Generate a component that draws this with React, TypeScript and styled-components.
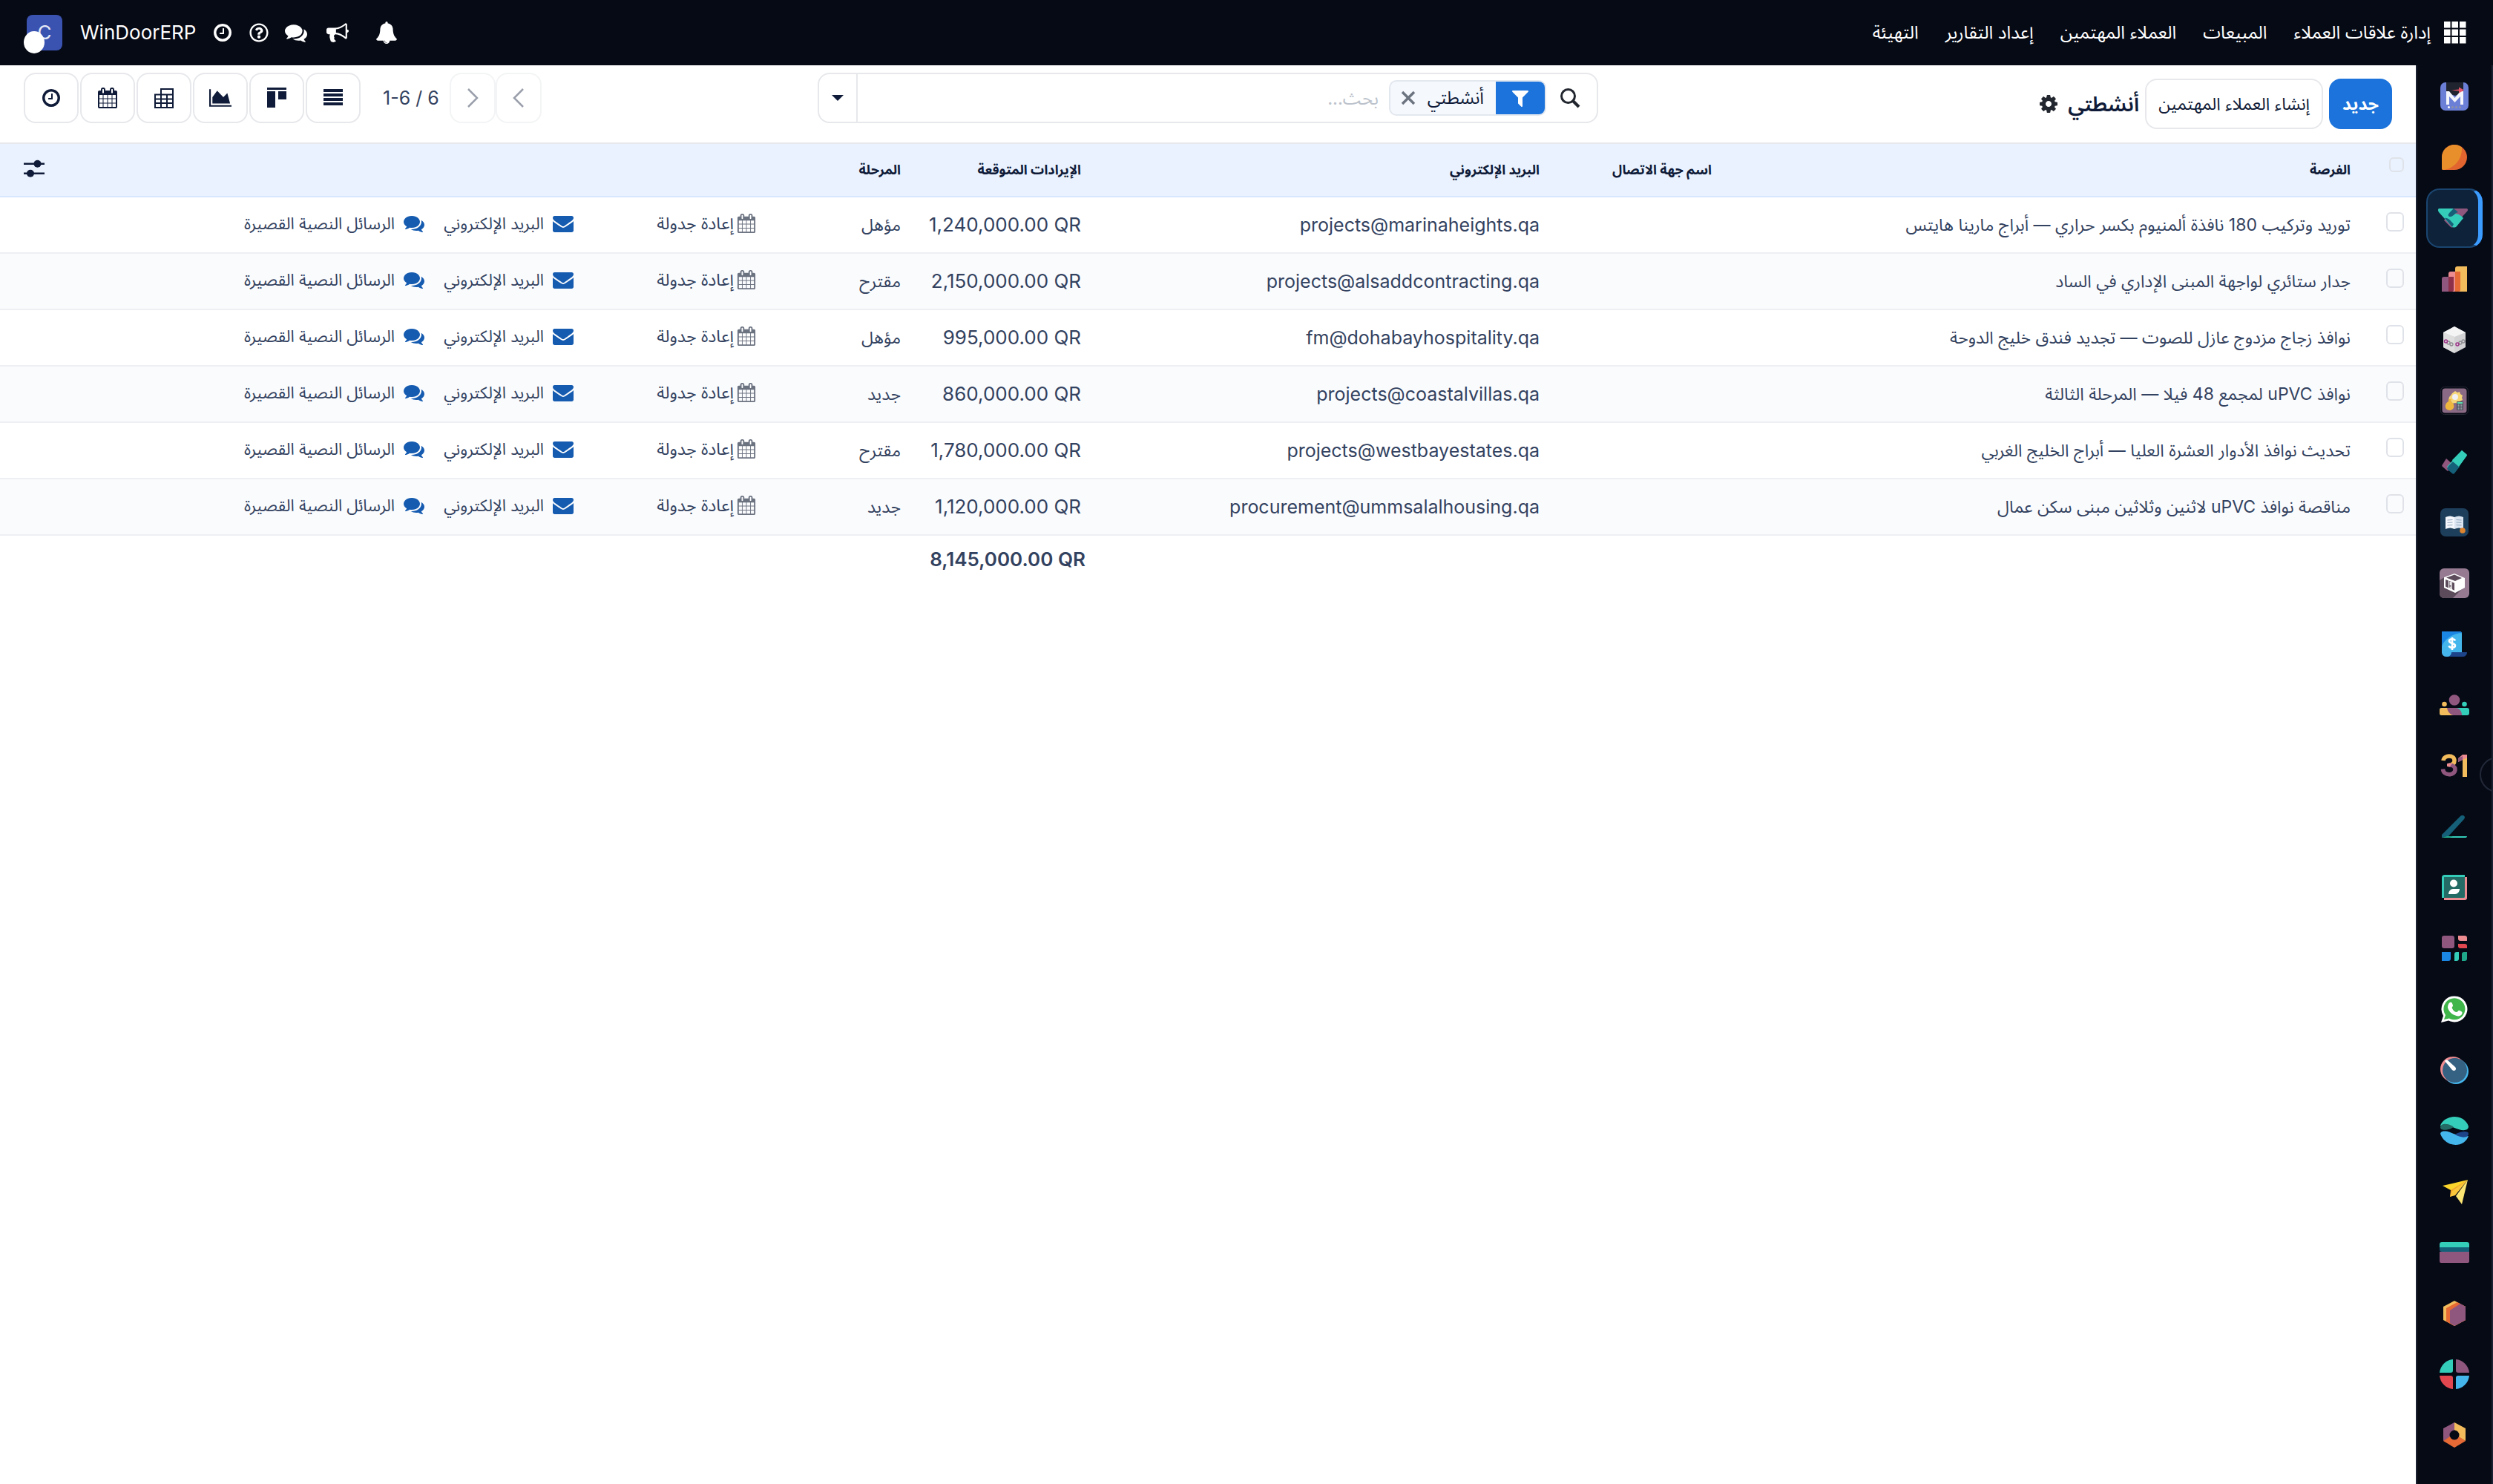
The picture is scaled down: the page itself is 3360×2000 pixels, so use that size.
import React from "react";
import styled, { createGlobalStyle, css } from "styled-components";
import { FaRegQuestionCircle } from "react-icons/fa";

const ink = "#0f1b38";
const text = "#334260";
const line = "#e7e8eb";
const night = "#060a15";

const GlobalStyle = createGlobalStyle`
  *, *::before, *::after { box-sizing: border-box; }
  html, body, #root { height: 100%; }
  body {
    margin: 0;
    background: #fff;
    color: ${text};
    font: 26px/40px Inter, "Noto Sans Arabic", "Noto Sans", "DejaVu Sans", sans-serif;
  }
  button, input { font: inherit; color: inherit; }
  a { color: inherit; text-decoration: none; }
`;

/* ---------- glyphs ---------- */

const paths = {
  clock:
    "M1024 544v448q0 14-9 23t-23 9h-320q-14 0-23-9t-9-23v-64q0-14 9-23t23-9h224v-352q0-14 9-23t23-9h64q14 0 23 9t9 23zm416 352q0-148-73-273t-198-198-273-73-273 73-198 198-73 273 73 273 198 198 273 73 273-73 198-198 73-273zm224 0q0 209-103 385.500t-279.500 279.500-385.500 103-385.500-103-279.500-279.500-103-385.500 103-385.500 279.500-279.500 385.500-103 385.500 103 279.500 279.500 103 385.500z",
  calendar:
    "M192 1664h288v-288h-288v288zm352 0h320v-288h-320v288zm-352-352h288v-320h-288v320zm352 0h320v-320h-320v320zm-352-384h288v-288h-288v288zm736 736h320v-288h-320v288zm-384-736h320v-288h-320v288zm768 736h288v-288h-288v288zm-384-352h320v-320h-320v320zm-352-864v-288q0-13-9.500-22.500t-22.500-9.500h-64q-13 0-22.500 9.500t-9.500 22.500v288q0 13 9.500 22.500t22.500 9.500h64q13 0 22.500-9.500t9.500-22.500zm736 864h288v-320h-288v320zm-384-384h320v-288h-320v288zm384 0h288v-288h-288v288zm32-480v-288q0-13-9.500-22.500t-22.500-9.500h-64q-13 0-22.500 9.500t-9.500 22.500v288q0 13 9.500 22.500t22.500 9.500h64q13 0 22.500-9.500t9.500-22.500zm384-64v1280q0 52-38 90t-90 38h-1408q-52 0-90-38t-38-90v-1280q0-52 38-90t90-38h128v-96q0-66 47-113t113-47h64q66 0 113 47t47 113v96h384v-96q0-66 47-113t113-47h64q66 0 113 47t47 113v96h128q52 0 90 38t38 90z",
  comments:
    "M1408 768q0 139-94 257t-256.500 186.500-353.500 68.500q-86 0-176-16-124 88-278 128-36 9-86 16h-3q-11 0-20.500-8t-11.500-21q-1-3-1-6.500t.5-6.500 2-6l2.500-5 3.500-5.500 4-5 4.500-5 4-4.500q5-6 23-25t26-29.500 22.500-29 25-38.500 20.500-44q-124-72-195-177t-71-224q0-139 94-257t256.500-186.500 353.500-68.500 353.500 68.500 256.500 186.500 94 257zm384 256q0 120-71 224.500t-195 176.500q10 24 20.500 44t25 38.500 22.500 29 26 29.500 23 25q1 1 4 4.500t4.500 5 4 5 3.500 5.500l2.500 5 2 6 .5 6.500-1 6.500q-3 14-13 22t-22 7q-50-7-86-16-154-40-278-128-90 16-176 16-271 0-472-132 58 4 88 4 161 0 309-45t264-129q125-92 192-212t67-254q0-77-23-152 129 71 204 178t75 230z",
  cog:
    "M1152 896q0-106-75-181t-181-75-181 75-75 181 75 181 181 75 181-75 75-181zm512-109v222q0 12-8 23t-20 13l-185 28q-19 54-39 91 35 50 107 138 10 12 10 25t-9 23q-27 37-99 108t-94 71q-12 0-26-9l-138-108q-44 23-91 38-16 136-29 186-7 28-36 28h-222q-14 0-24.500-8.500t-11.500-21.500l-28-184q-49-16-90-37l-141 107q-10 9-25 9-14 0-25-11-126-114-165-168-7-10-7-23 0-12 8-23 15-21 51-66.500t54-70.500q-27-50-41-99l-183-27q-13-2-21-12.500t-8-23.500v-222q0-12 8-23t19-13l186-28q14-46 39-92-40-57-107-138-10-12-10-24 0-10 9-23 26-36 98.500-107.500t94.500-71.500q13 0 26 10l138 107q44-23 91-38 16-136 29-186 7-28 36-28h222q14 0 24.500 8.500t11.500 21.500l28 184q49 16 90 37l142-107q9-9 24-9 13 0 25 10 129 119 165 170 7 8 7 22 0 12-8 23-15 21-51 66.500t-54 70.500q26 50 41 98l183 28q13 2 21 12.500t8 23.500z",
  bell:
    "M912 1696q0-16-16-16-59 0-101.500-42.500t-42.500-101.500q0-16-16-16t-16 16q0 73 51.500 124.500t124.500 51.500q16 0 16-16zm816-288q0 52-38 90t-90 38h-448q0 106-75 181t-181 75-181-75-75-181h-448q-52 0-90-38t-38-90q50-42 91-88t85-119.500 74.500-158.500 50-206 19.500-260q0-152 117-282.500t307-158.500q-8-19-8-39 0-40 28-68t68-28 68 28 28 68q0 20-8 39 190 28 307 158.500t117 282.500q0 139 19.500 260t50 206 74.500 158.500 85 119.500 91 88z",
  bullhorn:
    "M1664 640q53 0 90.500 37.500t37.500 90.500-37.500 90.500-90.500 37.500v384q0 52-38 90t-90 38q-417-347-812-380-58 19-91 66t-31 100.500 40 92.500q-20 33-23 65.500t6 58 33.500 55 48 50 61.500 50.500q-29 58-111.500 83t-168.500 11.500-132-55.500q-7-23-29.500-87.500t-32-94.500-23-89-15-101 3.500-98.500 22-110.500h-122q-66 0-113-47t-47-113v-192q0-66 47-113t113-47h480q435 0 896-384 52 0 90 38t38 90v384zm-128 604v-954q-394 302-768 343v270q377 42 768 341z",
  envelope:
    "M1792 710v794q0 66-47 113t-113 47h-1472q-66 0-113-47t-47-113v-794q44 49 101 87 362 246 497 345 57 42 92.500 65.500t94.500 48 110 24.500h2q51 0 110-24.500t94.500-48 92.500-65.500q170-123 498-345 57-39 100-87zm0-294q0 79-49 151t-122 123q-376 261-468 325-10 7-42.500 31t-54 38.500-52 32.500-57.500 27-50 9h-2q-23 0-50-9t-57.500-27-52-32.500-54-38.500-42.500-31q-91-64-262-182.500t-205-142.500q-62-42-117-115.500t-55-136.500q0-78 41.500-130t118.500-52h1472q65 0 112.500 47t47.500 113z",
  filter:
    "M1595 295q17 41-14 70l-493 493v742q0 42-39 59-13 5-25 5-27 0-45-19l-256-256q-19-19-19-45v-486l-493-493q-31-29-14-70 17-39 59-39h1280q42 0 59 39z",
  area: "M1792 1472v128h-1792v-1408h128v1280zm-336-960l224 832h-1424v-512l384-512 496 512z",
};

type Glyph = keyof typeof paths;

const Icon = ({ name, size = 28 }: { name: Glyph; size?: number }) => (
  <svg width={size} height={size} viewBox="0 0 1792 1792" fill="currentColor" aria-hidden>
    <path d={paths[name]} />
  </svg>
);

const Grid9 = () => (
  <svg width="30" height="30" viewBox="0 0 30 30" fill="currentColor" aria-hidden>
    {[0, 10.5, 21].map((y) => [0, 10.5, 21].map((x) => <rect key={x + "-" + y} x={x} y={y} width="8.5" height="8.5" />))}
  </svg>
);

const PivotIcon = () => (
  <svg width="28" height="28" viewBox="0 0 28 28" fill="none" stroke="currentColor" strokeWidth="2" aria-hidden>
    <path d="M2 9.500h24V27H2zM10 9.500V2h16v7.500M2 15.500h24M2 21h24M10 9.500V27M18 9.500V27" />
  </svg>
);

const KanbanIcon = () => (
  <svg width="28" height="28" viewBox="0 0 28 28" fill="currentColor" aria-hidden>
    <path d="M1 0h26v3H1zM1 5h11v22H1zM16 5h11v11H16z" />
  </svg>
);

const ListIcon = () => (
  <svg width="28" height="28" viewBox="0 0 28 28" fill="currentColor" aria-hidden>
    <path d="M1 2h26v4H1zM1 8h26v4H1zM1 14h26v4H1zM1 20h26v4H1z" />
  </svg>
);

const Chevron = ({ to }: { to: "left" | "right" }) => (
  <svg width="28" height="28" viewBox="0 0 28 28" fill="none" stroke="currentColor" strokeWidth="2.500" aria-hidden>
    <path d={to === "left" ? "M20 2L8 14l12 12" : "M8 2l12 12L8 26"} />
  </svg>
);

const SearchIcon = () => (
  <svg width="28" height="28" viewBox="0 0 28 28" fill="none" stroke="currentColor" strokeWidth="3" aria-hidden>
    <circle cx="11.500" cy="11.500" r="9" />
    <path d="M18 18l8 8" strokeWidth="4" />
  </svg>
);

const CloseIcon = () => (
  <svg width="20" height="20" viewBox="0 0 20 20" fill="none" stroke="currentColor" strokeWidth="3.500" aria-hidden>
    <path d="M2 2l16 16M18 2L2 18" />
  </svg>
);

const SlidersIcon = () => (
  <svg width="28" height="28" viewBox="0 0 28 28" fill="currentColor" aria-hidden>
    <path d="M0 6.500h28v2.500H0zM0 19.500h28v2.500H0z" />
    <circle cx="18.500" cy="7.800" r="5" />
    <circle cx="9" cy="20.800" r="5" />
  </svg>
);

/* ---------- app launcher drawings, 40x40 each ---------- */

const apps: { name: string; art: React.ReactNode }[] = [
  {
    name: "القائمة",
    art: (
      <>
        <rect x="1" y="1" width="38" height="38" rx="7" fill="#6b7fd7" />
        <path d="M9 1h23v14l-11 4-12-4z" fill="#20242e" />
        <path d="M9 31V13h4l7.500 9 7.500-9h4v18h-4V20l-7.500 8L13 20v11z" fill="#f4f5fb" />
        <path d="M16 11.500l10-1V7.500l7 4-7 4v-3z" fill="#e8566b" />
        <circle cx="12.500" cy="34.500" r="1.500" fill="#fff" />
        <g fill="#8f93a5"><circle cx="17.500" cy="34.500" r="1.500" /><circle cx="22.500" cy="34.500" r="1.500" /><circle cx="27.500" cy="34.500" r="1.500" /></g>
      </>
    ),
  },
  {
    name: "المناقشة",
    art: (
      <>
        <path d="M3 20a17 17 0 1 1 17 17H5a2 2 0 0 1-2-2z" fill="#e2652f" />
        <path d="M3 20A17 17 0 0 1 30 6.500C31 20 22 35 5 37a2 2 0 0 1-2-2z" fill="#e88f2c" />
      </>
    ),
  },
  {
    name: "إدارة علاقات العملاء",
    art: (
      <>
        <path d="M21 7h17c2 0 3 2 1 4L27 24 12 12z" fill="#8f567e" />
        <path d="M8 23c2-4 5-3 7-1l8 6c-2 5-4 5-6 4z" fill="#8f567e" />
        <path d="M2 7h19l-7 8c2 4 6 2 9-1 4 0 9 3 11 6L25 31c-2 2-5 2-7 0L1 12C-1 9 0 7 2 7z" fill="#34cdb9" />
        <path d="M21 7l6 5c-5 1-6 6-11 6-4-1-2-4 0-6zM9 20c5-1 8 4 12 8l-2 4z" fill="#155f78" />
      </>
    ),
  },
  {
    name: "المبيعات",
    art: (
      <>
        <path d="M24 3h13v34H21V6a3 3 0 0 1 3-3z" fill="#f2bb5c" />
        <path d="M15 10h13v24a3 3 0 0 1-3 3H12V13a3 3 0 0 1 3-3z" fill="#ec8b90" />
        <path d="M21 10h7v24a3 3 0 0 1-3 3h-4z" fill="#e56a35" />
        <path d="M6 17h13v17a3 3 0 0 1-3 3H3V20a3 3 0 0 1 3-3z" fill="#8f567e" />
        <path d="M12 17h7v17a3 3 0 0 1-3 3h-4z" fill="#8e3049" />
      </>
    ),
  },
  {
    name: "الوحدات",
    art: (
      <>
        <path d="M20 2l15 8v20l-15 8-15-8V10z" fill="#d2d2d4" />
        <path d="M20 2l15 8-15 6-15-6z" fill="#f4f4f4" />
        <path d="M5 10l15 6v22L5 30z" fill="#dedede" />
        <g fill="none" stroke="#8d8d92" strokeWidth="1.300"><circle cx="12" cy="24" r="2" /><circle cx="16" cy="26" r="2" /><circle cx="28" cy="24" r="2" /><circle cx="32" cy="22" r="2" /></g>
        <g fill="none" stroke="#a0348a" strokeWidth="1.500"><circle cx="8.500" cy="22" r="2" /><circle cx="24" cy="26" r="2" /></g>
      </>
    ),
  },
  {
    name: "التكاليف",
    art: (
      <>
        <rect x="1.500" y="1.500" width="37" height="37" rx="5" fill="none" stroke="#252733" />
        <rect x="3.500" y="3.500" width="33" height="33" rx="4" fill="#8a6a85" />
        <path d="M21 7l3 2 3-1 1 3 3 2-1 3 1 3-4 2-2 3-4-1-4 1-2-4-3-1 1-4 2-2 2-3z" fill="#f6d77a" />
        <circle cx="21" cy="15" r="4" fill="#f0f1f4" />
        <path d="M12 18h4l-1 3c6 3 6 11-1 12-8 0-8-9-2-12z" fill="#f0b73e" />
        <rect x="23" y="21" width="9" height="12" rx="1" fill="#4a4f5c" />
        <path d="M24 22h7v2h-7z" fill="#5fe0b5" />
        <path d="M24.500 26h6M24.500 28.500h6M24.500 31h6" stroke="#e7e7ea" strokeDasharray="1.500 .8" />
      </>
    ),
  },
  {
    name: "المهام",
    art: (
      <>
        <path d="M9 16l10 9-8 8-7-6c-1-1-1-2 0-3z" fill="#8f567e" />
        <path d="M30 5l6 5c1 1 1 2 0 3L19 36l-9-9z" fill="#34cdb9" />
        <path d="M12 26l6-6 9 7-7 9c-1 1-2 1-3 0l-7-6z" fill="#155f78" />
        <path d="M18 20l-1-2L30 5l6 5c1 1 1 2 0 3L26 27z" fill="#34cdb9" />
      </>
    ),
  },
  {
    name: "المعرفة",
    art: (
      <>
        <rect x="1" y="1" width="38" height="38" rx="7" fill="#1d3f5c" />
        <path d="M8 13c4-2 8-2 12 0v16c-4-2-8-2-12 0z" fill="#f4f7fb" />
        <path d="M20 13c4-2 8-2 12 0v16c-4-2-8-2-12 0z" fill="#dbe5f1" />
        <path d="M10.500 17l7-.5M10.500 20.500l7-.5M10.500 24l7-.5M22.500 16.500l7 .5M22.500 20l7 .5M22.500 23.500l7 .5" stroke="#93a7bd" strokeWidth="1" />
        <circle cx="31" cy="31" r="3.800" fill="#dd8430" />
      </>
    ),
  },
  {
    name: "المخزون",
    art: (
      <>
        <rect x="0" y="0" width="40" height="40" rx="6" fill="#957a91" />
        <path d="M0 16L8 11l25 14-15 15H6a6 6 0 0 1-6-6z" fill="#5c4c5b" />
        <path d="M6 12l14-5 14 6v13l-13 7-15-7z" fill="#fff" />
        <path d="M9 12.500l11-4 10 4.500-9 4z" fill="#5c4c5b" />
        <path d="M8 15l4 1.500v10L8 24.500zM17 18.500l3 1.200v10l-3-1.400z" fill="#5c4c5b" />
        <path d="M13 17l3 1v9.500l-3-1.500z" fill="#5c4c5b" />
        <path d="M14.500 18v5M14.500 24.500v2" stroke="#fff" strokeWidth="1.800" />
      </>
    ),
  },
  {
    name: "المصروفات",
    art: (
      <>
        <path d="M3 3h24a3 3 0 0 1 3 3v26H17l-7 5-7-5z" fill="#45b6ec" />
        <path d="M3 3h24a3 3 0 0 1 3 2C17 6 7 13 3 23z" fill="#1c86e3" />
        <path d="M3 28v3a6 6 0 0 0 7 6h6V28z" fill="#45b6ec" />
        <path d="M16 31h21c0 4-3 6-6 6H10c3 0 6-2 6-6z" fill="#1d4489" />
        <path d="M21 15.500c-1-3-8-3-8 .5s8 2.500 8 6-7 4-8.500.5M17 11v17" fill="none" stroke="#fff" strokeWidth="2.600" />
      </>
    ),
  },
  {
    name: "الموظفون",
    art: (
      <>
        <circle cx="20" cy="13.500" r="7.300" fill="#8f567e" />
        <circle cx="6.500" cy="19" r="3.300" fill="#f2bb5c" />
        <circle cx="33.500" cy="19" r="3.300" fill="#34cdb9" />
        <rect x="0" y="24" width="40" height="10" rx="3" fill="#34cdb9" />
        <path d="M3 24h8l13 10H3a3 3 0 0 1-3-3v-4a3 3 0 0 1 3-3z" fill="#f2bb5c" />
        <path d="M10 24h12c4 0 8 4 8 10H20c-5 0-9-4-10-10z" fill="#8f567e" />
      </>
    ),
  },
  {
    name: "التقويم",
    art: (
      <>
        <g fill="none" strokeWidth="5.500">
          <path d="M5 13c1-8 15-8 15 0 0 4-3 6-8 6" stroke="#f2bb5c" />
          <path d="M12.500 19c6 0 8.500 3 8.500 6 0 9-16 9-16.500-.5" stroke="#8f567e" />
        </g>
        <path d="M10 17h7l-3 4h-4z" fill="#ec8b90" />
        <path d="M31 5h6v30h-6z" fill="#f2bb5c" />
        <path d="M31 5h6v4l-12 6v-5z" fill="#ec8b90" />
        <path d="M25 10l6-3v5l-6 3z" fill="#8f567e" />
      </>
    ),
  },
  {
    name: "التوقيع",
    art: (
      <>
        <path d="M28 6c3-3 8 0 5 4L12 33l-9 2v-4z" fill="#155f78" />
        <path d="M8 35l5-2h24c0 1-1 2-2 2z" fill="#34cdb9" />
        <path d="M3 35l7-2h8l-4 2z" fill="#1fa98a" />
      </>
    ),
  },
  {
    name: "جهات الاتصال",
    art: (
      <>
        <path d="M6 6h31v28a3 3 0 0 1-3 3H6z" fill="#ec8b90" />
        <path d="M7 3h27v31H3V7a4 4 0 0 1 4-4z" fill="#34cdb9" />
        <path d="M6 6h28v26a2 2 0 0 1-2 2H6z" fill="#256b65" />
        <circle cx="19" cy="14.500" r="5" fill="#fff" />
        <path d="M18 22h9c0 4-3 7-6 7h-9c0-4 3-7 6-7z" fill="#fff" />
      </>
    ),
  },
  {
    name: "لوحات المعلومات",
    art: (
      <>
        <rect x="3" y="3" width="17" height="17" rx="3" fill="#8f567e" />
        <path d="M25 3h9a3 3 0 0 1 3 3v4h-9a3 3 0 0 1-3-3z" fill="#ec8b90" />
        <path d="M25 14h9a3 3 0 0 1 3 3v3h-9a3 3 0 0 1-3-3z" fill="#e2474f" />
        <path d="M3 25h12v9a3 3 0 0 1-3 3H3z" fill="#1c86e3" />
        <path d="M23 25h3v9a3 3 0 0 1-3 3h-3v-9a3 3 0 0 1 3-3z" fill="#34cdb9" />
        <path d="M33 25h4v9a3 3 0 0 1-3 3h-4v-9a3 3 0 0 1 3-3z" fill="#1fa98a" />
      </>
    ),
  },
  {
    name: "واتساب",
    art: (
      <>
        <path d="M2 38l3-9A17.500 17.500 0 1 1 12 35.500z" fill="#fff" />
        <path d="M6 34l2-6A14.500 14.500 0 1 1 13 32.500z" fill="#3fb54a" />
        <path d="M14 11c2-1 3 0 4 4 0 2-2 2-1 4 1 3 4 5 6 5 2 0 2-3 4-2 4 2 4 2 3 5-2 3-6 3-10 1-5-2-8-6-9-10 0-3 1-6 3-7z" fill="#fff" />
      </>
    ),
  },
  {
    name: "سجلات الوقت",
    art: (
      <>
        <circle cx="22" cy="22" r="17" fill="#45b6ec" />
        <circle cx="18" cy="19" r="17" fill="#ec8b90" />
        <circle cx="20.500" cy="20.500" r="16.500" fill="#356182" />
        <path d="M7 8c1-2 3-2 4-1l10 9c3 3-1 7-4 4z" fill="#fff" />
      </>
    ),
  },
  {
    name: "الاشتراكات",
    art: (
      <>
        <path d="M1 13C6-2 33-4 39 14c0 7-10 6-19 2C12 11 1 14 1 13z" fill="#34cdb9" />
        <path d="M1 15c1-6 12-5 18 0-6 4-18 6-18 0z" fill="#256b65" />
        <path d="M1 24c1-5 10-4 18 0 8 3 16 4 20 3C33 44 8 43 1 24z" fill="#45b6ec" />
        <path d="M21 25c6-4 18-6 18-1-1 7-12 5-18 1z" fill="#1d4489" />
      </>
    ),
  },
  {
    name: "تيليجرام",
    art: (
      <>
        <path d="M4 12l34-8-21 15z" fill="#fbd52b" />
        <path d="M38 4L14 27l1-9z" fill="#f2a52c" />
        <path d="M38 4L21 25l-7 2 3-8z" fill="#fbc63a" />
        <path d="M38 4l-8 33-8-11z" fill="#fbe573" />
      </>
    ),
  },
  {
    name: "المدفوعات",
    art: (
      <>
        <path d="M3 6h34a3 3 0 0 1 3 3v5H0V9a3 3 0 0 1 3-3z" fill="#34cdb9" />
        <path d="M0 19h40v13a2 2 0 0 1-2 2H2a2 2 0 0 1-2-2z" fill="#8f567e" />
        <path d="M0 13h40v6H3a3 3 0 0 1-3-3z" fill="#155f78" />
      </>
    ),
  },
  {
    name: "الشحن",
    art: (
      <>
        <path d="M20 3l15 8v18l-15 8-15-8V11z" fill="#f2bb5c" />
        <path d="M9 13l15-8 11 6v18l-15 8-11-6z" fill="#e56a35" />
        <path d="M14 16l14-9 7 4v18l-15 8-6-4z" fill="#8f567e" />
      </>
    ),
  },
  {
    name: "التقارير",
    art: (
      <>
        <path d="M18 0v15a3 3 0 0 1-3 3H0A20 20 0 0 1 18 0z" fill="#34cdb9" />
        <path d="M22 0v15a3 3 0 0 0 3 3h15A20 20 0 0 0 22 0z" fill="#8f567e" />
        <path d="M18 40V25a3 3 0 0 0-3-3H0a20 20 0 0 0 18 18z" fill="#e2474f" />
        <path d="M22 40V25a3 3 0 0 1 3-3h15a20 20 0 0 1-18 18z" fill="#45b6ec" />
      </>
    ),
  },
  {
    name: "الإعدادات",
    art: (
      <>
        <path d="M20 3L5 11v17l9-5 6-10z" fill="#8f567e" />
        <path d="M20 3l15 8v17l-9-5-6-10z" fill="#f2bb5c" />
        <path d="M5 28l9-6h12l9 6-15 9z" fill="#e56a35" />
        <circle cx="20" cy="20" r="6.500" fill={night} />
      </>
    ),
  },
];

/* ---------- shell ---------- */

const Shell = styled.div`
  min-height: 100vh;
  display: flex;
  flex-direction: column;
`;

const TopBar = styled.header`
  height: 88px;
  display: flex;
  align-items: center;
  justify-content: space-between;
  padding: 0 36px;
  background: ${night};
  color: #fff;
`;

const MainNav = styled.nav`
  display: flex;
  align-items: center;
  gap: 36px;
  font-size: 24px;
`;

const AppHome = styled.a`
  display: flex;
  align-items: center;
  gap: 18px;
`;

const Tray = styled.div`
  display: flex;
  align-items: center;
  gap: 22px;
`;

const TrayButton = styled.button<{ $after?: number }>`
  display: flex;
  padding: 0;
  border: 0;
  background: none;
  color: #fff;
  margin-inline-end: ${(p) => p.$after ?? 0}px;
`;

const Avatar = styled.div`
  position: relative;
  width: 48px;
  height: 48px;
  margin-inline-start: 2px;
  border-radius: 8px;
  background: #3a53b0;
  color: #e5e8f6;
  text-align: center;
  line-height: 48px;
`;

const StatusDot = styled.span`
  position: absolute;
  left: -4px;
  bottom: -4px;
  width: 28px;
  height: 30px;
  border-radius: 50%;
  background: #fff;
`;

const Body = styled.div`
  flex: 1;
  display: flex;
`;

const Rail = styled.aside`
  position: relative;
  overflow: hidden;
  width: 104px;
  flex: none;
  display: flex;
  flex-direction: column;
  align-items: center;
  gap: 2px;
  padding-top: 2px;
  background: ${night};
  border: 0 solid #1b2130;
  border-width: 0 2px;
`;

const RailLink = styled.a<{ $active?: boolean }>`
  width: 76px;
  height: 80px;
  flex: none;
  display: flex;
  align-items: center;
  justify-content: center;
  border-radius: 18px;
  ${(p) =>
    p.$active &&
    css`
      background: #0e2239;
      border: 2px solid #1a4570;
      border-right: 6px solid #3b9bff;
    `}
`;

const RailHandle = styled.button`
  position: absolute;
  right: -32px;
  top: 50%;
  width: 48px;
  height: 48px;
  margin-top: -24px;
  border: 2px solid #222838;
  border-radius: 50%;
  background: ${night};
`;

const Main = styled.main`
  flex: 1;
  min-width: 0;
`;

/* ---------- control panel ---------- */

const Panel = styled.div`
  display: grid;
  grid-template-columns: 1fr minmax(0, 1052px) 1fr;
  column-gap: 32px;
  height: 106px;
  padding: 10px 32px 0;
  border-bottom: 2px solid ${line};
`;

const Actions = styled.div`
  display: flex;
  align-items: center;
  align-self: start;
  gap: 8px;
  padding-top: 8px;
`;

const Button = styled.button<{ $primary?: boolean }>`
  height: 68px;
  padding: 0 16px;
  border: 2px solid ${(p) => (p.$primary ? "#1b73db" : line)};
  border-radius: 16px;
  background: ${(p) => (p.$primary ? "#1b73db" : "#fff")};
  color: ${(p) => (p.$primary ? "#fff" : ink)};
  font-size: 23px;
  font-weight: ${(p) => (p.$primary ? 700 : 400)};
  white-space: nowrap;
`;

const Title = styled.h1`
  display: flex;
  align-items: center;
  gap: 12px;
  margin: 0;
  font-size: 28px;
  font-weight: 600;
  color: ${ink};
`;

const GearButton = styled.button`
  display: flex;
  padding: 0;
  border: 0;
  background: none;
  color: #22262e;
`;

const Search = styled.form`
  height: 68px;
  display: flex;
  align-items: center;
  border: 2px solid ${line};
  border-radius: 16px;
  color: #22262e;
  font-size: 24px;
`;

const SearchLabel = styled.label`
  display: flex;
  padding: 0 22px 0 18px;
`;

const Facet = styled.div`
  height: 48px;
  display: flex;
  align-items: center;
  overflow: hidden;
  border: 2px solid #e3e8ef;
  border-radius: 10px;
  background: #f5f8fd;
  color: ${ink};
`;

const FacetIcon = styled.span`
  width: 66px;
  height: 100%;
  display: flex;
  align-items: center;
  justify-content: center;
  background: #1b73db;
  color: #fff;
`;

const FacetText = styled.span`
  padding: 0 16px;
`;

const FacetClose = styled.button`
  display: flex;
  padding: 0;
  margin-inline-end: 14px;
  border: 0;
  background: none;
  color: #6c7480;
`;

const SearchInput = styled.input`
  flex: 1;
  min-width: 0;
  height: 100%;
  padding: 0 14px;
  border: 0;
  outline: 0;
  background: none;
  &::placeholder { color: #bcc2cb; opacity: 1; }
`;

const SearchToggle = styled.button`
  width: 52px;
  height: 100%;
  display: flex;
  align-items: center;
  justify-content: center;
  padding: 0;
  border: 0;
  border-right: 2px solid ${line};
  background: none;
  color: ${ink};
`;

const ViewTools = styled.div`
  display: flex;
  align-items: center;
  align-self: start;
  justify-content: flex-end;
`;

const Pager = styled.div`
  display: flex;
`;

const PagerButton = styled.button`
  width: 62px;
  height: 68px;
  display: flex;
  align-items: center;
  justify-content: center;
  padding: 0;
  border: 2px solid #f3f4f5;
  border-radius: 16px;
  background: none;
  color: #9a9fab;
`;

const PagerCount = styled.span`
  margin: 0 14px 0 30px;
  font-size: 25px;
`;

const Views = styled.div`
  display: flex;
  gap: 2px;
`;

const ViewButton = styled.button`
  width: 74px;
  height: 68px;
  display: flex;
  align-items: center;
  justify-content: center;
  padding: 0;
  border: 2px solid ${line};
  border-radius: 16px;
  background: none;
  color: ${ink};
`;

/* ---------- list ---------- */

const List = styled.table`
  width: 100%;
  table-layout: fixed;
  border-collapse: separate;
  border-spacing: 0;
`;

const Col = styled.col<{ $w?: number }>`
  width: ${(p) => (p.$w ? p.$w + "px" : "auto")};
`;

const Th = styled.th`
  height: 72px;
  padding: 0 16px;
  border-bottom: 2px solid #d6e7fe;
  background: #eaf2ff;
  color: ${ink};
  font-size: 18px;
  font-weight: 700;
  text-align: right;
  white-space: nowrap;
`;

const Row = styled.tr`
  &:nth-child(even) { background: #fafbfd; }
`;

const Td = styled.td<{ $size?: number }>`
  height: 76px;
  padding: 0 16px;
  border-bottom: 2px solid #eeeff2;
  font-size: ${(p) => p.$size ?? 23}px;
  text-align: right;
  white-space: nowrap;
`;

const Total = styled.td`
  height: 64px;
  padding: 0 10px;
  font-weight: 600;
  text-align: right;
  white-space: nowrap;
`;

const Check = styled.input<{ $small?: boolean }>`
  appearance: none;
  display: block;
  width: ${(p) => (p.$small ? 20 : 24)}px;
  height: ${(p) => (p.$small ? 20 : 26)}px;
  margin: 0 0 ${(p) => (p.$small ? 14 : 8)}px;
  border: 2px solid #dfe2e8;
  border-radius: 6px;
`;

const RowAction = styled.button<{ $muted?: boolean }>`
  display: flex;
  align-items: center;
  gap: ${(p) => (p.$muted ? 4 : 12)}px;
  padding: 0 0 4px;
  border: 0;
  background: none;
  svg { color: ${(p) => (p.$muted ? "#6b7280" : "#155bb0")}; }
`;

const ColumnsButton = styled.button`
  display: flex;
  margin-inline-start: auto;
  margin-inline-end: 16px;
  padding: 0 0 4px;
  border: 0;
  background: none;
  color: ${ink};
`;

const rows = [
  ["توريد وتركيب 180 نافذة ألمنيوم بكسر حراري — أبراج مارينا هايتس", "projects@marinaheights.qa", "1,240,000.00 QR", "مؤهل"],
  ["جدار ستائري لواجهة المبنى الإداري في الساد", "projects@alsaddcontracting.qa", "2,150,000.00 QR", "مقترح"],
  ["نوافذ زجاج مزدوج عازل للصوت — تجديد فندق خليج الدوحة", "fm@dohabayhospitality.qa", "995,000.00 QR", "مؤهل"],
  ["نوافذ uPVC لمجمع 48 فيلا — المرحلة الثالثة", "projects@coastalvillas.qa", "860,000.00 QR", "جديد"],
  ["تحديث نوافذ الأدوار العشرة العليا — أبراج الخليج الغربي", "projects@westbayestates.qa", "1,780,000.00 QR", "مقترح"],
  ["مناقصة نوافذ uPVC لاثنين وثلاثين مبنى سكن عمال", "procurement@ummsalalhousing.qa", "1,120,000.00 QR", "جديد"],
];

const menu = ["المبيعات", "العملاء المهتمين", "إعداد التقارير", "التهيئة"];

export default function App() {
  return (
    <Shell dir="rtl" lang="ar">
      <GlobalStyle />
      <TopBar>
        <MainNav>
          <AppHome href="#home">
            <Grid9 />
            إدارة علاقات العملاء
          </AppHome>
          {menu.map((m) => (
            <a key={m} href="#menu">{m}</a>
          ))}
        </MainNav>
        <Tray>
          <TrayButton $after={14} aria-label="الإشعارات"><Icon name="bell" size={30} /></TrayButton>
          <TrayButton $after={4} aria-label="الإعلانات"><Icon name="bullhorn" size={30} /></TrayButton>
          <TrayButton aria-label="الرسائل"><Icon name="comments" size={30} /></TrayButton>
          <TrayButton aria-label="المساعدة"><FaRegQuestionCircle size={26} /></TrayButton>
          <TrayButton aria-label="الأنشطة"><Icon name="clock" /></TrayButton>
          <span>WinDoorERP</span>
          <Avatar>C<StatusDot /></Avatar>
        </Tray>
      </TopBar>
      <Body>
        <Rail>
          {apps.map((a, i) => (
            <RailLink key={a.name} href="#app" title={a.name} $active={i === 2}>
              <svg width="40" height="40" viewBox="0 0 40 40" aria-hidden>{a.art}</svg>
            </RailLink>
          ))}
          <RailHandle aria-label="طي الشريط" />
        </Rail>
        <Main>
          <Panel>
            <Actions>
              <Button $primary>جديد</Button>
              <Button>إنشاء العملاء المهتمين</Button>
              <Title>
                أنشطتي
                <GearButton aria-label="إجراءات"><Icon name="cog" /></GearButton>
              </Title>
            </Actions>
            <Search role="search">
              <SearchLabel htmlFor="search" aria-label="بحث"><SearchIcon /></SearchLabel>
              <Facet>
                <FacetIcon><Icon name="filter" /></FacetIcon>
                <FacetText>أنشطتي</FacetText>
                <FacetClose type="button" aria-label="إزالة"><CloseIcon /></FacetClose>
              </Facet>
              <SearchInput id="search" placeholder="بحث..." />
              <SearchToggle type="button" aria-label="خيارات البحث">
                <svg width="16" height="8" viewBox="0 0 16 8" aria-hidden><path d="M0 0h16L8 8z" fill="currentColor" /></svg>
              </SearchToggle>
            </Search>
            <ViewTools>
              <Pager>
                <PagerButton aria-label="السابق"><Chevron to="left" /></PagerButton>
                <PagerButton aria-label="التالي"><Chevron to="right" /></PagerButton>
              </Pager>
              <PagerCount dir="ltr">1-6 / 6</PagerCount>
              <Views>
                <ViewButton aria-label="قائمة"><ListIcon /></ViewButton>
                <ViewButton aria-label="كانبان"><KanbanIcon /></ViewButton>
                <ViewButton aria-label="رسم بياني"><Icon name="area" size={30} /></ViewButton>
                <ViewButton aria-label="جدول محوري"><PivotIcon /></ViewButton>
                <ViewButton aria-label="تقويم"><Icon name="calendar" /></ViewButton>
                <ViewButton aria-label="نشاط"><Icon name="clock" /></ViewButton>
              </Views>
            </ViewTools>
          </Panel>
          <List>
            <colgroup>
              <Col $w={72} />
              <Col />
              <Col $w={232} />
              <Col $w={618} />
              <Col $w={243} />
              <Col $w={195} />
              <Col $w={246} />
              <Col $w={201} />
              <Col $w={588} />
            </colgroup>
            <thead>
              <tr>
                <Th><Check $small type="checkbox" aria-label="تحديد الكل" /></Th>
                <Th>الفرصة</Th>
                <Th>اسم جهة الاتصال</Th>
                <Th>البريد الإلكتروني</Th>
                <Th>الإيرادات المتوقعة</Th>
                <Th>المرحلة</Th>
                <Th />
                <Th />
                <Th><ColumnsButton aria-label="الأعمدة"><SlidersIcon /></ColumnsButton></Th>
              </tr>
            </thead>
            <tbody>
              {rows.map(([name, mail, revenue, stage]) => (
                <Row key={name}>
                  <Td><Check type="checkbox" aria-label={name} /></Td>
                  <Td>{name}</Td>
                  <Td />
                  <Td $size={25}>{mail}</Td>
                  <Td $size={26}><bdi dir="ltr">{revenue}</bdi></Td>
                  <Td>{stage}</Td>
                  <Td><RowAction $muted><Icon name="calendar" size={26} />إعادة جدولة</RowAction></Td>
                  <Td $size={22}><RowAction><Icon name="envelope" />البريد الإلكتروني</RowAction></Td>
                  <Td $size={22}><RowAction><Icon name="comments" />الرسائل النصية القصيرة</RowAction></Td>
                </Row>
              ))}
            </tbody>
            <tfoot>
              <tr>
                <td colSpan={4} />
                <Total><bdi dir="ltr">8,145,000.00 QR</bdi></Total>
                <td colSpan={4} />
              </tr>
            </tfoot>
          </List>
        </Main>
      </Body>
    </Shell>
  );
}
